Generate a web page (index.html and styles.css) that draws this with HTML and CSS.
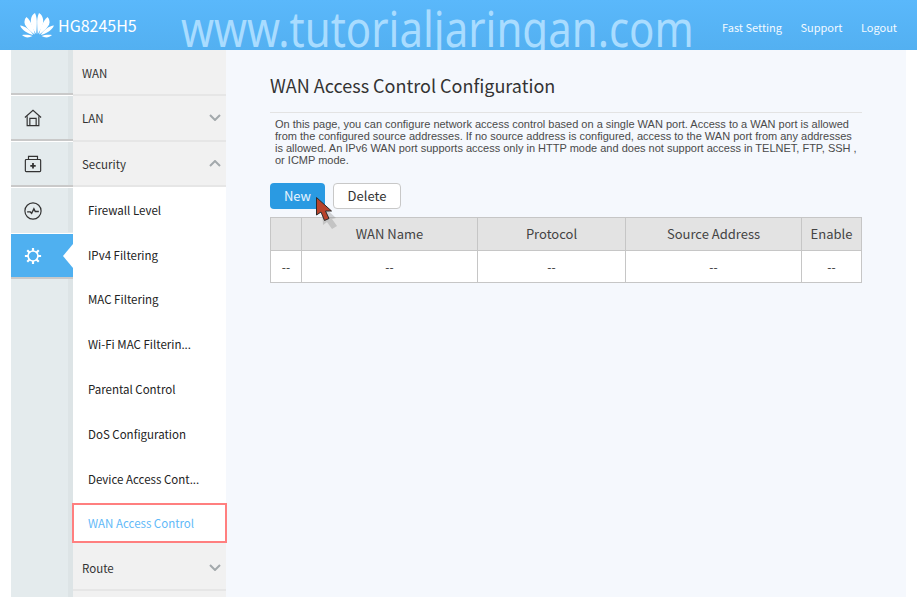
FILE: index.html
```html
<!DOCTYPE html>
<html lang="en">
<head>
<meta charset="utf-8">
<title>WAN Access Control Configuration</title>
<link rel="stylesheet" href="styles.css">
</head>
<body>
<header class="topbar">
  <div class="brand">
    <svg class="logo" width="34" height="25" viewBox="0 0 34 25">
      <g fill="#fff">
        <path d="M16.200 21 C13 16 10 11 11 6 C11.500 3 13 1 15 0 C16.500 3 17 7 16.800 11 C16.700 15 16.400 18 16.200 21Z"/>
        <path d="M17.800 21 C21 16 24 11 23 6 C22.500 3 21 1 19 0 C17.500 3 17 7 17.200 11 C17.300 15 17.600 18 17.800 21Z"/>
        <path d="M14.800 21.500 C10 18 5 14 4.500 9.500 C4.400 7.500 5 5.500 6.500 4 C9 6 11 9.500 12.500 13 C13.500 15.500 14.300 18.500 14.800 21.500Z"/>
        <path d="M19.200 21.500 C24 18 29 14 29.500 9.500 C29.600 7.500 29 5.500 27.500 4 C25 6 23 9.500 21.500 13 C20.500 15.500 19.700 18.500 19.200 21.500Z"/>
        <path d="M13.300 22 C8 20.500 2.500 18 0 12.500 C5 13 10 16.500 13.300 22Z"/>
        <path d="M20.700 22 C26 20.500 31.500 18 34 12.500 C29 13 24 16.500 20.700 22Z"/>
        <path d="M12.500 23 C9 25 5 25 2 22 C5.500 21.300 9.500 21.800 12.500 23Z"/>
        <path d="M21.500 23 C25 25 29 25 32 22 C28.500 21.300 24.500 21.800 21.500 23Z"/>
      </g>
    </svg>
    <span class="model">HG8245H5</span>
  </div>
  <div class="watermark">www.tutorialjaringan.com</div>
  <nav class="toplinks">
    <a>Fast Setting</a>
    <a>Support</a>
    <a>Logout</a>
  </nav>
</header>
<div class="shell">
  <aside class="rail">
    <div class="rail-cell rail-top"></div>
    <div class="rail-cell">
      <svg width="18" height="18" viewBox="0 0 20 20" fill="none" stroke="#333" stroke-width="1.3">
        <path d="M1 9.500 10 1.500 19 9.500"/>
        <path d="M3.500 8V18.500H16.500V8"/>
        <path d="M6.500 18.500V10.500H13.500V18.500"/>
      </svg>
    </div>
    <div class="rail-cell">
      <svg width="18" height="18" viewBox="0 0 20 20" fill="none" stroke="#333" stroke-width="1.3">
        <rect x="1.500" y="5" width="17" height="13.500" rx="1"/>
        <path d="M5 5V1.500H15V5"/>
        <path d="M10 9V15M7 12H13" stroke-width="2"/>
      </svg>
    </div>
    <div class="rail-cell">
      <svg width="18" height="18" viewBox="0 0 20 20" fill="none" stroke="#333" stroke-width="1.3">
        <circle cx="10" cy="10" r="9"/>
        <path d="M3.500 11H7L8.500 12.500 11 7.500 12.500 10.500H16.500" stroke-width="1.500"/>
      </svg>
    </div>
    <div class="rail-cell rail-active">
      <svg width="18" height="18" viewBox="0 0 20 20" fill="none" stroke="#fff">
        <circle cx="10" cy="10" r="5.500" stroke-width="1.800"/>
        <path d="M10 1V4.500M10 15.500V19M1 10H4.500M15.500 10H19M3.600 3.600 6.100 6.100M13.900 13.900 16.400 16.400M16.400 3.600 13.900 6.100M6.100 13.900 3.600 16.400" stroke-width="2.400"/>
      </svg>
      <span class="rail-notch"></span>
    </div>
    <div class="rail-cell rail-rest"></div>
  </aside>
  <nav class="menu">
    <div class="group group-wan">WAN</div>
    <div class="group group-lan">LAN<svg class="chev" width="12" height="7" viewBox="0 0 12 7"><path d="M1 1 6 6 11 1"/></svg></div>
    <div class="group group-open">Security<svg class="chev" width="12" height="7" viewBox="0 0 12 7"><path d="M1 6 6 1 11 6"/></svg></div>
    <ul class="sub">
      <li>Firewall Level</li>
      <li>IPv4 Filtering</li>
      <li>MAC Filtering</li>
      <li>Wi-Fi MAC Filterin...</li>
      <li>Parental Control</li>
      <li>DoS Configuration</li>
      <li class="nudge">Device Access Cont...</li>
      <li class="current">WAN Access Control</li>
    </ul>
    <div class="group group-route">Route<svg class="chev" width="12" height="7" viewBox="0 0 12 7"><path d="M1 1 6 6 11 1"/></svg></div>
  </nav>
  <main class="content">
    <h1 class="title">WAN Access Control Configuration</h1>
    <p class="desc">On this page, you can configure network access control based on a single WAN port. Access to a WAN port is allowed from the configured source addresses. If no source address is configured, access to the WAN port from any addresses is allowed. An IPv6 WAN port supports access only in HTTP mode and does not support access in TELNET, FTP, SSH , or ICMP mode.</p>
    <div class="actions">
      <button class="btn btn-new">New</button>
      <button class="btn btn-delete">Delete</button>
      <svg class="cursor" width="26" height="34" viewBox="0 0 26 34">
        <path d="M8 9 22 22 18 23 23 30 18 33 13 26 9 29Z" fill="#8a8a8a" opacity=".35"/>
        <path d="M2.500 1.500 2.500 19 7 16 10.500 24.500 15 22.500 11.500 15 17.500 15Z" fill="#b8432c" stroke="#2b2b2b" stroke-width="1"/>
      </svg>
    </div>
    <table class="grid">
      <colgroup>
        <col class="c0"><col class="c1"><col class="c2"><col class="c3"><col class="c4">
      </colgroup>
      <thead>
        <tr><th></th><th>WAN Name</th><th>Protocol</th><th>Source Address</th><th>Enable</th></tr>
      </thead>
      <tbody>
        <tr><td>--</td><td>--</td><td>--</td><td>--</td><td>--</td></tr>
      </tbody>
    </table>
  </main>
</div>
</body>
</html>
```
FILE: styles.css
```css
* { box-sizing: border-box; }
html, body { margin: 0; height: 100%; }
body {
  width: 917px;
  height: 597px;
  overflow: hidden;
  background: #fff;
  font-family: "Noto Sans CJK SC", "Noto Sans", sans-serif;
  color: #333;
}
.topbar {
  height: 50px;
  display: flex;
  align-items: center;
  background: linear-gradient(#5ab8fb, #53b0f1);
  position: relative;
}
.brand {
  display: flex;
  align-items: center;
  padding-left: 20px;
}
.logo { display: block; margin-top: 1px; }
.model {
  color: #fff;
  font-size: 16px;
  margin-left: 4px;
  margin-top: -1px;
}
.watermark {
  position: absolute;
  left: 181px;
  top: 0;
  padding-top: 3px;
  font-family: "Noto Sans", sans-serif;
  font-size: 49px;
  line-height: 50px;
  color: #a9dcff;
  white-space: nowrap;
  transform: scaleX(.857);
  transform-origin: left top;
}
.toplinks {
  margin-left: auto;
  display: flex;
  gap: 18.500px;
  padding-right: 20px;
  font-size: 11px;
  color: #f2f9ff;
  margin-top: 3px;
}
.shell {
  display: flex;
  height: 547px;
  padding: 0 11px;
  position: relative;
  z-index: 1;
  background: #fff;
}
.rail {
  width: 62px;
  flex: none;
  display: flex;
  flex-direction: column;
}
.rail-cell {
  height: 46px;
  flex: none;
  position: relative;
  display: flex;
  align-items: center;
  justify-content: center;
  padding-right: 18px;
  padding-top: 1px;
  background: linear-gradient(90deg, #e4ebed 57px, #dde4e6 57px);
  border-bottom: 2px solid #c9c9c9;
  border-top: 1px solid #fff;
}
.rail-top { height: 45px; border-top: 0; }
.rail-cell:nth-child(4) { height: 46px; border-bottom: 1px solid #e4ebed; }
.rail-active {
  background: #4fb0f0;
  height: 45px;
  border: 0;
  margin-top: 1px;
  padding-top: 1px;
  border-bottom: 2px solid #c9c9c9;
}
.rail-notch {
  position: absolute;
  right: 0;
  top: 10px;
  width: 0;
  height: 0;
  border: 12px solid transparent;
  border-left: 0;
  border-right: 10px solid #fff;
}
.rail-rest { flex: 1; border: 0; }
.menu {
  width: 153px;
  flex: none;
  background: #f1f1f1;
  font-size: 11.500px;
  color: #333;
}
.group {
  height: 46px;
  display: flex;
  align-items: center;
  justify-content: space-between;
  padding: 0 5px 0 9px;
  border-bottom: 2px solid #e6e6e6;
}
.group-wan { padding-top: 1px; }
.group-lan { padding-bottom: 1px; }
.group-open { height: 45px; }
.group-route { height: 46px; padding-top: 1px; }
.chev { fill: none; stroke: #a3a9ac; stroke-width: 2; }
.sub {
  list-style: none;
  margin: 0;
  padding: 0;
  background: #fff;
}
.sub li {
  height: 44.750px;
  display: flex;
  align-items: center;
  padding-left: 15px;
  padding-top: 1px;
  color: #222;
  white-space: nowrap;
}
.sub li.nudge { padding-top: 2px; }
.sub li.current {
  position: relative;
  z-index: 1;
  color: #5fb9f8;
  outline: 2px solid #ff7f7f;
  outline-offset: -1px;
  padding-top: 0;
  height: 38px;
  margin-top: 3.750px;
  margin-bottom: 3px;
}
.content {
  width: 680px;
  flex: none;
  background: #f5f8fd;
  padding: 21px 44px 0;
}
.title {
  margin: 0;
  font-size: 18px;
  font-weight: 400;
  line-height: 28px;
  color: #333;
  padding-bottom: 13px;
  border-bottom: 1px solid #e3e3e3;
}
.desc {
  margin: 5px 0 0;
  padding: 0 5px;
  font-family: "Liberation Sans", sans-serif;
  font-size: 11px;
  line-height: 12px;
  color: #4a4a4a;
}
.actions {
  margin-top: 17px;
  display: flex;
  gap: 8px;
  position: relative;
}
.btn {
  height: 26px;
  font-family: "Noto Sans CJK SC", "Noto Sans", sans-serif;
  font-size: 13px;
  border-radius: 4px;
  padding: 0;
  line-height: 24px;
}
.btn-new {
  width: 55px;
  background: #2a9ae2;
  color: #e8f5ff;
  border: 0;
}
.btn-delete {
  width: 68px;
  background: #fff;
  color: #333;
  border: 1px solid #c8c8c8;
}
.cursor {
  position: absolute;
  left: 44px;
  top: 13px;
}
.grid {
  margin-top: 8px;
  width: 592px;
  table-layout: fixed;
  border-collapse: collapse;
  font-size: 13px;
  text-align: center;
}
.c0 { width: 31px; }
.c1 { width: 176px; }
.c2 { width: 148px; }
.c3 { width: 176px; }
.c4 { width: 60px; }
.grid th, .grid td {
  border: 1px solid #c6c6c6;
  padding: 0;
  font-weight: 400;
  color: #444;
}
.grid th { height: 33px; background: #e3e3e3; padding-bottom: 2px; }
.grid td { height: 32px; background: #fff; font-size: 12px; color: #333; }
```
